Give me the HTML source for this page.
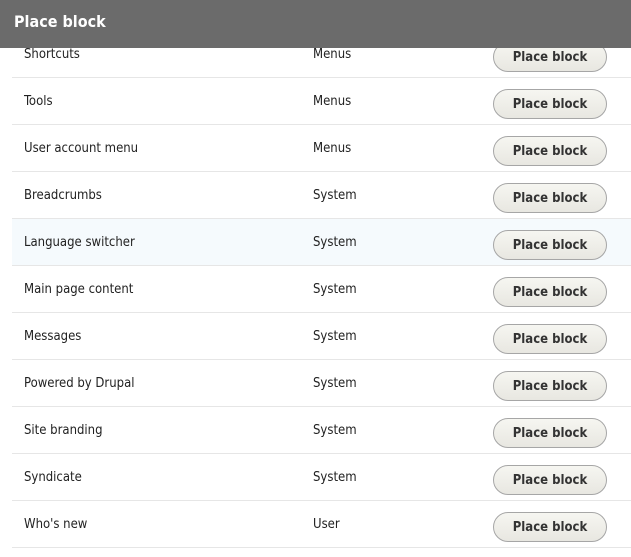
<!DOCTYPE html><html><head><style>
body{margin:0;width:631px;height:557px;overflow:hidden;background:#fff;font-family:"DejaVu Sans Condensed","Liberation Sans",sans-serif;font-size:13px;color:#222;position:relative}
.h{position:absolute;left:0;top:0;width:631px;height:48px;background:#6b6b6b;color:#fff;font-weight:bold;font-size:16px;line-height:44px;padding-left:14px;box-sizing:border-box;z-index:2}
.r{position:absolute;left:12px;width:619px;height:46px;border-bottom:1px solid #e6e6e6}
.r span{position:absolute;top:16px}
.a{left:12px}.c{left:301px}
.b{position:absolute;left:481px;top:11px;width:112px;height:28px;border:1px solid #a6a6a6;border-radius:15px;background:linear-gradient(#f6f6f1,#e8e7e1);font-weight:bold;font-size:13px;color:#333;text-align:center;line-height:29px}
</style></head><body>
<div class="h">Place block</div>
<div class="r" style="top:31px"><span class="a">Shortcuts</span><span class="c">Menus</span><div class="b">Place block</div></div>
<div class="r" style="top:78px"><span class="a">Tools</span><span class="c">Menus</span><div class="b">Place block</div></div>
<div class="r" style="top:125px"><span class="a">User account menu</span><span class="c">Menus</span><div class="b">Place block</div></div>
<div class="r" style="top:172px"><span class="a">Breadcrumbs</span><span class="c">System</span><div class="b">Place block</div></div>
<div class="r" style="top:219px;background:#f5fafd"><span class="a">Language switcher</span><span class="c">System</span><div class="b">Place block</div></div>
<div class="r" style="top:266px"><span class="a">Main page content</span><span class="c">System</span><div class="b">Place block</div></div>
<div class="r" style="top:313px"><span class="a">Messages</span><span class="c">System</span><div class="b">Place block</div></div>
<div class="r" style="top:360px"><span class="a">Powered by Drupal</span><span class="c">System</span><div class="b">Place block</div></div>
<div class="r" style="top:407px"><span class="a">Site branding</span><span class="c">System</span><div class="b">Place block</div></div>
<div class="r" style="top:454px"><span class="a">Syndicate</span><span class="c">System</span><div class="b">Place block</div></div>
<div class="r" style="top:501px"><span class="a">Who's new</span><span class="c">User</span><div class="b">Place block</div></div>
</body></html>
